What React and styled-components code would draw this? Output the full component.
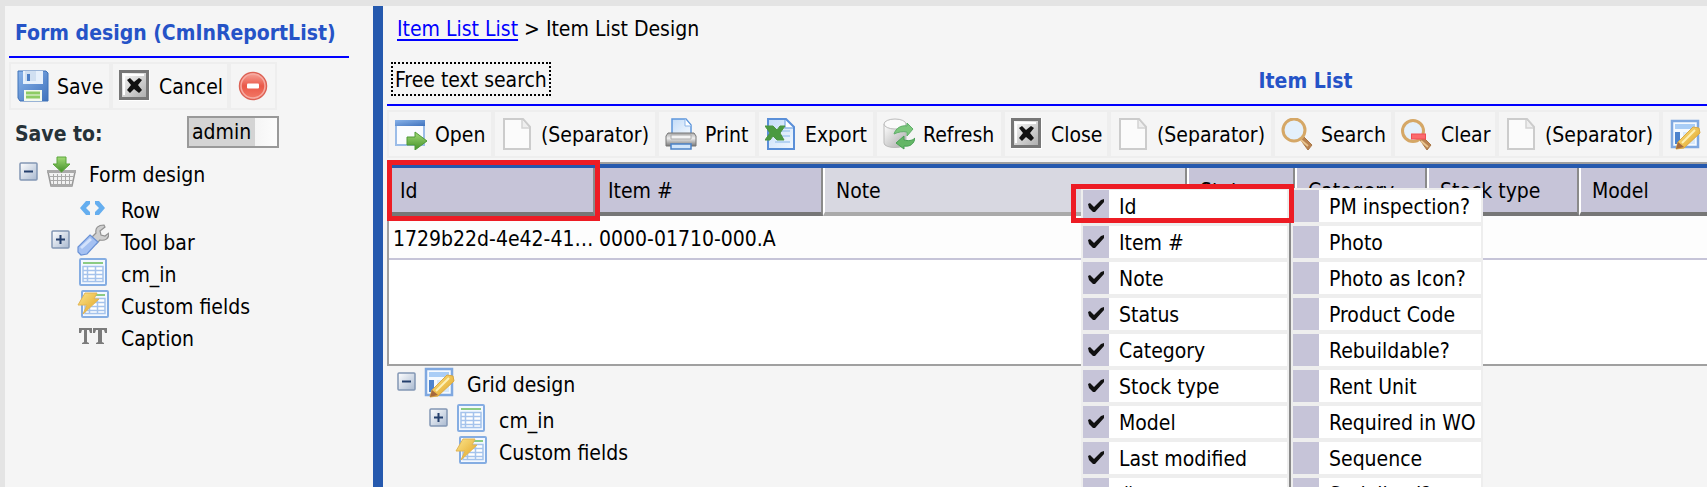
import React, { useState } from "react";
import styled, { createGlobalStyle } from "styled-components";

const GlobalStyle = createGlobalStyle`
  * {
    box-sizing: border-box;
  }

  body {
    margin: 0;
    background-color: #e4e4e4;
  }

  body, button, select {
    font-family: "DejaVu Sans Condensed", "DejaVu Sans", sans-serif;
    font-stretch: condensed;
    font-size: 21px;
    line-height: 26px;
    color: #000;
  }
`;

const Shell = styled.div`
  display: flex;
  height: 100vh;
  padding: 6px 0 0 5px;
  overflow: hidden;
`;

const SidePanel = styled.aside`
  flex: 0 0 368px;
  padding-left: 4px;
  background-color: #f5f5f5;
`;

const Splitter = styled.div`
  flex: 0 0 10px;
  background-color: #2559ae;
`;

const Main = styled.main`
  flex: 1;
  min-width: 0;
  padding-left: 4px;
  background-color: #f5f5f5;
`;

/* the report is wider than most screens, the rest runs off to the right */
const Report = styled.div`
  min-width: 1833px;
`;

const PanelTitle = styled.h1`
  margin: 0 24px 4px 0;
  padding: 14px 0 10px 6px;
  border-bottom: 2px solid #00f;
  font-size: 21px;
  line-height: 26px;
  font-weight: bold;
  white-space: nowrap;
  color: #2553c7;
`;

const ToolBar = styled.div`
  display: flex;
`;

const ToolButton = styled.button`
  display: flex;
  flex: none;
  align-items: center;
  gap: 8px;
  width: ${({ $width }) => $width}px;
  height: 48px;
  padding: 0 6px;
  border: 2px solid #eee;
  background-color: #f5f5f5;
  white-space: nowrap;
  cursor: pointer;

  &:hover {
    background-color: #fff;
  }
`;

const ToolText = styled.span`
  padding-top: 2px;
`;

const SaveRow = styled.div`
  display: flex;
  align-items: center;
  padding: 6px 0 8px 6px;
`;

const SaveLabel = styled.label`
  width: 172px;
  padding-top: 4px;
  font-weight: bold;
  color: #263238;
`;

const SaveSelect = styled.select`
  appearance: none;
  width: 92px;
  height: 32px;
  padding: 0 3px;
  border: 2px solid #999;
  border-radius: 0;
  background: linear-gradient(90deg, #d4d4d4 66px, #f5f5f5 66px, #fcfcfc);
`;

const TreeList = styled.ul`
  margin: 0;
  padding: 0 0 0 10px;
  list-style: none;
`;

const TreeRow = styled.li`
  display: flex;
  align-items: flex-start;
  height: ${({ $level }) => ($level ? 32 : 36)}px;
  padding-left: ${({ $level }) => $level * 32}px;
`;

const ToggleSlot = styled.div`
  flex: 0 0 26px;
  padding-top: 6px;
`;

const Toggle = styled.button`
  display: block;
  padding: 0;
  border: 0;
  background: none;
  cursor: pointer;
`;

const TreeText = styled.span`
  padding: 5px 0 0 12px;
  line-height: 28px;
`;

const BreadCrumb = styled.nav`
  padding: 10px 0 20px 10px;
`;

const CrumbLink = styled.a`
  color: #00f;
  text-decoration: underline;
  text-decoration-thickness: 2px;
  text-underline-offset: 3px;
`;

const ReportHead = styled.header`
  display: grid;
  grid-template-columns: 1fr auto 1fr;
  align-items: start;
  height: 44px;
  margin-bottom: 4px;
  padding-left: 4px;
  border-bottom: 2px solid #00f;
`;

const SearchCaption = styled.span`
  justify-self: start;
  padding: 2px 2px 0;
  border: 2px dotted #000;
  line-height: 28px;
`;

const ReportTitle = styled.h2`
  margin: 0;
  padding-top: 6px;
  font-size: 21px;
  line-height: 26px;
  font-weight: bold;
  color: #2553c7;
`;

const GridBox = styled.section`
  position: relative;
  height: 204px;
  margin: 4px 0 0;
  border: 2px solid #a0a0a0;
  background-color: #fff;
`;

const Table = styled.table`
  width: 100%;
  table-layout: fixed;
  border-collapse: separate;
  border-spacing: 0;
  border-top: 4px solid #2559ae;
`;

const HeadCell = styled.th`
  position: relative;
  z-index: ${({ $first }) => ($first ? 1 : 0)};
  width: ${({ $width }) => ($width ? `${$width}px` : "auto")};
  height: 48px;
  padding: 2px 11px 0;
  border-left: ${({ $first }) => ($first ? "0" : "2px solid #fff")};
  border-right: 2px solid #8a8a8a;
  border-bottom: 4px solid ${({ $active }) => ($active ? "#aaa" : "#777")};
  background-color: ${({ $active }) => ($active ? "#d8d8e1" : "#c6c4d8")};
  font-weight: normal;
  text-align: left;
`;

const Cell = styled.td`
  height: 44px;
  padding: 4px 0 0 4px;
  border-bottom: 2px solid #c6c4d8;
  background-color: #fdfdfd;
  overflow: hidden;
  text-overflow: ellipsis;
  white-space: nowrap;
`;

const RedFrame = styled.span`
  position: absolute;
  inset: ${({ $inset }) => $inset};
  border: 5px solid #ed1c24;
  pointer-events: none;
`;

const Menu = styled.div`
  position: absolute;
  z-index: 2;
  top: 24px;
  left: 692px;
  display: grid;
  grid-template-columns: 208px 194px;
  background-color: #eee;
`;

const MenuColumn = styled.div`
  display: flex;
  flex-direction: column;
  gap: 4px;
  padding: 2px;

  &:first-child {
    position: relative;
    z-index: 1;
  }

  & + & {
    border-left: 2px solid #888;
  }
`;

const MenuItem = styled.label`
  position: relative;
  display: grid;
  grid-template-columns: 26px 1fr;
  align-items: center;
  height: 32px;
  background-color: #fff;
  white-space: nowrap;
  cursor: pointer;
`;

const MenuCheck = styled.input`
  appearance: none;
  grid-area: 1 / 1;
  width: 26px;
  height: 32px;
  margin: 0;
  background-color: #c6c4d8;

  & + svg {
    visibility: hidden;
  }

  &:checked + svg {
    visibility: visible;
  }
`;

const CheckMark = styled.svg`
  grid-area: 1 / 1;
  justify-self: center;
  pointer-events: none;
`;

const MenuText = styled.span`
  padding: 2px 0 0 10px;
`;

const Icon = ({ children, size = 32 }) => (
  <svg width={size} height={size} viewBox={`0 0 ${size} ${size}`} style={{ flex: "none" }} aria-hidden="true">
    {children}
  </svg>
);

const Gradients = () => (
  <svg width="0" height="0" style={{ position: "absolute" }} aria-hidden="true">
    <defs>
      <linearGradient id="blue" x2="1" y2="1">
        <stop offset="0" stopColor="#8ab4ea" />
        <stop offset="1" stopColor="#3f72bd" />
      </linearGradient>
      <linearGradient id="paleBlue" x2="1" y2="1">
        <stop offset="0" stopColor="#c3dcf8" />
        <stop offset="1" stopColor="#f2f8fe" />
      </linearGradient>
      <linearGradient id="grey" x2="1" y2="1">
        <stop offset="0" stopColor="#fff" />
        <stop offset="1" stopColor="#aaa" />
      </linearGradient>
      <linearGradient id="metal" x2="0" y2="1">
        <stop offset="0" stopColor="#aaa" />
        <stop offset="0.4" stopColor="#eee" />
        <stop offset="1" stopColor="#777" />
      </linearGradient>
      <linearGradient id="green" x2="0" y2="1">
        <stop offset="0" stopColor="#a2db77" />
        <stop offset="1" stopColor="#459129" />
      </linearGradient>
      <linearGradient id="gold" x2="1" y2="1">
        <stop offset="0" stopColor="#fbe58c" />
        <stop offset="1" stopColor="#e1a11e" />
      </linearGradient>
      <linearGradient id="red" x2="0" y2="1">
        <stop offset="0" stopColor="#f7a79d" />
        <stop offset="0.5" stopColor="#ea5848" />
        <stop offset="1" stopColor="#f37b68" />
      </linearGradient>
      <linearGradient id="toggle" x2="1" y2="1">
        <stop offset="0" stopColor="#fff" />
        <stop offset="1" stopColor="#a9b9d0" />
      </linearGradient>
    </defs>
  </svg>
);

const SaveIcon = () => (
  <Icon>
    <path d="M1 1h28l2 2v28H3l-2-3z" fill="url(#blue)" stroke="#3f72b8" />
    <path d="M6 1h20v13H6z" fill="#e7f0fb" />
    <path d="M8 1h11v10H8z" fill="#d0dff1" />
    <path d="M10 4h3v7h-3z" fill="#4b7dc5" />
    <path d="M7 20h18v11H7z" fill="#f3f9ed" />
    <path d="M9 23h14M9 27h14" stroke="#8dcc64" strokeWidth="3" />
  </Icon>
);

const CloseIcon = () => (
  <Icon>
    <path d="M0 0h31v31H0z" fill="#fff" />
    <path d="M1.5 1.5h27v27h-27z" fill="url(#grey)" stroke="#777" strokeWidth="3" />
    <path d="M5 25V5h20" fill="none" stroke="#fff" strokeWidth="2" />
    <path d="M8 10l3-2 4 4 5-4 3 2-4 5 4 5-3 3-5-4-4 4-3-3 4-5z" fill="#111" />
  </Icon>
);

const DeleteIcon = () => (
  <Icon>
    <circle cx="16" cy="16" r="13.5" fill="url(#red)" stroke="#dc6255" strokeWidth="1.5" />
    <circle cx="16" cy="16" r="12" fill="none" stroke="#f6aaa1" strokeWidth="1.5" />
    <rect x="10" y="13.5" width="12" height="5" rx="1" fill="#fff" />
  </Icon>
);

const BasketIcon = () => (
  <Icon>
    <path d="M3 16h27l-3 14H6z" fill="#f2f2f2" stroke="#999" strokeWidth="1.5" />
    <path d="M5 20.5h24M5 24.5h23M8.500 18v12M12.500 18v12M16.500 18v12M20.500 18v12M24.500 18v12" stroke="#aaa" />
    <path d="M2 14h29v3H2zM6 28h21v3H6z" fill="#aaa" />
    <path d="M12 1h9v7h4l-8.500 8L8 8h4z" fill="url(#green)" stroke="#5aa53b" />
  </Icon>
);

const CodeIcon = () => (
  <Icon>
    <path d="M13 9H9l-6 7 6 7h4v-3l-4-4 4-4zM18 9h4l6 7-6 7h-4v-3l4-4-4-4z" fill="#65aeef" />
  </Icon>
);

const WrenchIcon = () => (
  <Icon>
    <path
      d="M15 13l4-4c-1-5 2-8 8-8l1 2-5 4 1 4 4 1 4-3c0 6-4 8-9 7l-4 4z"
      fill="#cfcfcf"
      stroke="#929292"
      strokeWidth="1.2"
    />
    <path d="M13 11l8 7-11 12-6 1-3-3v-5z" fill="#a5c1f2" stroke="#6a92d6" strokeWidth="1.2" />
    <path d="M4 24l10-9" stroke="#d3e2fb" strokeWidth="3" />
  </Icon>
);

const Sheet = ({ x = 0 }) => (
  <g transform={`translate(${x} 0)`}>
    <rect x="3" y="3" width="26" height="26" rx="1" fill="#f3f8ff" stroke="#85ade2" strokeWidth="2" />
    <path d="M6 7h20" stroke="#8bcb83" strokeWidth="2" />
    <path
      d="M6 10.500h20v15H6zM6 14.500h20M6 18.500h20M6 22.500h20M10.500 10.500v15M18.500 10.500v15"
      fill="#fff"
      stroke="#a5c3ec"
      strokeWidth="1.5"
    />
  </g>
);

const SheetIcon = () => (
  <Icon>
    <Sheet />
  </Icon>
);

const CustomIcon = () => (
  <Icon>
    <Sheet x={2} />
    <path d="M8 5h12l-3 6h5L6 26l4-9H1z" fill="url(#gold)" stroke="#e3b654" />
  </Icon>
);

const CaptionIcon = () => (
  <Icon>
    <path
      d="M2 8h13v5h-2l-1-3h-2v12l2 1v1H5v-1l2-1V10H5l-1 3H2zM16 8h14v5h-2l-1-3h-2v12l2 1v1h-8v-1l2-1V10h-2l-1 3h-2z"
      fill="#7b7b7b"
    />
  </Icon>
);

const OpenIcon = () => (
  <Icon>
    <path d="M1 3h28v24H1z" fill="#fafcff" stroke="#9cbde8" strokeWidth="2" />
    <path d="M0 2h30v6H0z" fill="url(#blue)" />
    <path d="M12 19h8v-5l12 9-12 9v-5h-8z" fill="url(#green)" stroke="#4f9a36" />
  </Icon>
);

const PageIcon = () => (
  <Icon>
    <path d="M3 1h19l7 8v22H3z" fill="#fbfbfb" stroke="#ccc" strokeWidth="2" />
    <path d="M21 2v8h7" fill="#eee" stroke="#d4d4d4" strokeWidth="1.5" />
  </Icon>
);

const PrintIcon = () => (
  <Icon>
    <path d="M7 17V1h14l5 6v10z" fill="url(#paleBlue)" stroke="#5d96dc" strokeWidth="1.5" />
    <path d="M20 1v7h6" fill="#fff" stroke="#8db6e8" />
    <path d="M3 15h26l2 3v10H1V18z" fill="url(#metal)" stroke="#777" />
    <path d="M6 17h20v4H6z" fill="#f3f3f3" stroke="#aaa" />
    <path d="M6 26h20v5H6z" fill="#d2e6fb" stroke="#4b82c8" strokeWidth="1.5" />
  </Icon>
);

const ExcelIcon = () => (
  <Icon>
    <path d="M3 1h18l8 8v22H3z" fill="url(#paleBlue)" stroke="#5a8fd8" strokeWidth="2" />
    <path d="M20 2v8h8" fill="#fff" stroke="#8db6e8" strokeWidth="1.5" />
    <path d="M12 13h13M14 18h11M10 24h15" stroke="#b5d3f3" strokeWidth="2" />
    <path d="M0 8h8l4 4 3-4h5l-5 7 4 7h-7l-4-4-3 4H0l5-7z" fill="#4a9a40" stroke="#4d9440" />
  </Icon>
);

const RefreshIcon = () => (
  <Icon>
    <path d="M1 6v19c0 6 22 6 22 0V6z" fill="url(#grey)" stroke="#bbb" />
    <ellipse cx="12" cy="6" rx="11" ry="5" fill="#fafafa" stroke="#bbb" />
    <path d="M11 16c2-6 7-9 13-8V5l6 6-6 7v-4c-4-1-9 0-13 2z" fill="#7cc77c" stroke="#5fae69" />
    <path d="M32 20c-1 6-5 9-11 8v3l-8-6 8-7v4c4 1 8 1 11-2z" fill="#64b666" stroke="#479f52" />
  </Icon>
);

const SearchIcon = () => (
  <Icon>
    <path d="M19 21l3-3 9 9-4 5z" fill="#b98250" stroke="#a97745" />
    <circle cx="13" cy="12" r="11" fill="#e4f0fb" stroke="#d5a766" strokeWidth="3" />
    <path d="M20 22l7 6" stroke="#e8c48f" strokeWidth="2" />
  </Icon>
);

const ClearIcon = () => (
  <Icon>
    <path d="M19 22l3-3 8 8-4 5z" fill="#b98250" stroke="#a97745" />
    <circle cx="12" cy="13" r="10.500" fill="#e4f0fb" stroke="#d5a766" strokeWidth="3" />
    <path d="M20 23l7 6" stroke="#e8c48f" strokeWidth="2" />
    <rect x="10.500" y="16" width="14" height="5" fill="#fb6b6e" stroke="#f14c54" />
  </Icon>
);

const DesignIcon = () => (
  <Icon>
    <rect x="3" y="3" width="26" height="26" fill="#f5faff" stroke="#7fa8e0" strokeWidth="2.5" />
    <path d="M6 6h20v5H6z" fill="#a9cdf6" />
    <path d="M6 14h5v12H6z" fill="#4d83cd" />
    <path d="M14 14h12v12H14z" fill="#d8e9fb" />
    <path d="M9 24L24 9l6 1 1 5-16 15-8 1z" fill="url(#gold)" stroke="#dba943" />
    <path d="M9 24l6 5-8 2z" fill="#a66a3d" />
    <path d="M13 25L26 12" stroke="#fdf0b5" strokeWidth="2" />
  </Icon>
);

const ToggleIcon = ({ open }) => (
  <Icon size={20}>
    <rect x="1" y="1" width="17" height="17" rx="1" fill="url(#toggle)" stroke="#8296b4" strokeWidth="1.5" />
    <path d={open ? "M5 9.500h9" : "M5 9.500h9M9.500 5v9"} stroke="#243f6c" strokeWidth="2" />
  </Icon>
);

const formTree = [
  { name: "Form design", icon: BasketIcon, level: 0, open: true },
  { name: "Row", icon: CodeIcon, level: 1 },
  { name: "Tool bar", icon: WrenchIcon, level: 1, open: false },
  { name: "cm_in", icon: SheetIcon, level: 1 },
  { name: "Custom fields", icon: CustomIcon, level: 1 },
  { name: "Caption", icon: CaptionIcon, level: 1 },
];

const gridTree = [
  { name: "Grid design", icon: DesignIcon, level: 0, open: true },
  { name: "cm_in", icon: SheetIcon, level: 1, open: false },
  { name: "Custom fields", icon: CustomIcon, level: 1 },
];

const tools = [
  { name: "Open", icon: OpenIcon, width: 106 },
  { name: "(Separator)", icon: PageIcon, width: 164 },
  { name: "Print", icon: PrintIcon, width: 100 },
  { name: "Export", icon: ExcelIcon, width: 118 },
  { name: "Refresh", icon: RefreshIcon, width: 128 },
  { name: "Close", icon: CloseIcon, width: 106 },
  { name: "(Separator)", icon: PageIcon, width: 164 },
  { name: "Search", icon: SearchIcon, width: 120 },
  { name: "Clear", icon: ClearIcon, width: 104 },
  { name: "(Separator)", icon: PageIcon, width: 164 },
  { name: "Design", icon: DesignIcon, width: 120 },
];

const columns = [
  { name: "Id", width: 206, value: "1729b22d-4e42-4161-9c1d" },
  { name: "Item #", width: 228, value: "0000-01710-000.A" },
  { name: "Note", width: 364, active: true },
  { name: "Status", width: 108 },
  { name: "Category", width: 132 },
  { name: "Stock type", width: 152 },
  { name: "Model" },
];

const shownFields = ["Id", "Item #", "Note", "Status", "Category", "Stock type", "Model", "Last modified", "#"];

const hiddenFields = [
  "PM inspection?",
  "Photo",
  "Photo as Icon?",
  "Product Code",
  "Rebuildable?",
  "Rent Unit",
  "Required in WO",
  "Sequence",
  "Serialized?",
];

const Tree = ({ items }) => (
  <TreeList>
    {items.map(({ name, icon: ItemIcon, level, open }) => (
      <TreeRow key={name} $level={level}>
        <ToggleSlot>
          {open !== undefined && (
            <Toggle type="button" aria-expanded={open} aria-label={name}>
              <ToggleIcon open={open} />
            </Toggle>
          )}
        </ToggleSlot>
        <ItemIcon />
        <TreeText>{name}</TreeText>
      </TreeRow>
    ))}
  </TreeList>
);

const ColumnMenu = () => {
  const [checked, setChecked] = useState(shownFields);

  const toggle = (name) =>
    setChecked((list) => (list.includes(name) ? list.filter((n) => n !== name) : [...list, name]));

  return (
    <Menu>
      {[shownFields, hiddenFields].map((fields) => (
        <MenuColumn key={fields[0]}>
          {fields.map((name) => (
            <MenuItem key={name}>
              <MenuCheck type="checkbox" checked={checked.includes(name)} onChange={() => toggle(name)} />
              <CheckMark width="16" height="16" viewBox="0 0 16 16">
                <path d="M0 6l2-1 4 4 7-7 3-1v3L7 14H5L1 10z" fill="#111" />
              </CheckMark>
              <MenuText>{name}</MenuText>
              {name === "Id" && <RedFrame $inset="-6px -7px -1px -12px" />}
            </MenuItem>
          ))}
        </MenuColumn>
      ))}
    </Menu>
  );
};

const App = () => {
  return (
    <Shell>
      <GlobalStyle />
      <Gradients />
      <SidePanel>
        <PanelTitle>Form design (CmInReportList)</PanelTitle>
        <ToolBar>
          <ToolButton type="button" $width={102}>
            <SaveIcon />
            <ToolText>Save</ToolText>
          </ToolButton>
          <ToolButton type="button" $width={118}>
            <CloseIcon />
            <ToolText>Cancel</ToolText>
          </ToolButton>
          <ToolButton type="button" $width={48} aria-label="Delete">
            <DeleteIcon />
          </ToolButton>
        </ToolBar>
        <SaveRow>
          <SaveLabel htmlFor="saveTo">Save to:</SaveLabel>
          <SaveSelect id="saveTo">
            <option>admin</option>
          </SaveSelect>
        </SaveRow>
        <Tree items={formTree} />
      </SidePanel>
      <Splitter />
      <Main>
        <Report>
          <BreadCrumb>
            <CrumbLink href="#list">Item List List</CrumbLink> &gt; Item List Design
          </BreadCrumb>
          <ReportHead>
            <SearchCaption>Free text search</SearchCaption>
            <ReportTitle>Item List</ReportTitle>
          </ReportHead>
          <ToolBar>
            {tools.map(({ name, icon: ToolIcon, width }, i) => (
              <ToolButton key={i} type="button" $width={width}>
                <ToolIcon />
                <ToolText>{name}</ToolText>
              </ToolButton>
            ))}
          </ToolBar>
          <GridBox>
            <Table>
              <thead>
                <tr>
                  {columns.map(({ name, width, active }, i) => (
                    <HeadCell key={name} $width={width} $active={active} $first={i === 0}>
                      {name}
                      {i === 0 && <RedFrame $inset="-8px -7px -9px -2px" />}
                    </HeadCell>
                  ))}
                </tr>
              </thead>
              <tbody>
                <tr>
                  {columns.map(({ name, value }) => (
                    <Cell key={name}>{value}</Cell>
                  ))}
                </tr>
              </tbody>
            </Table>
            <ColumnMenu />
          </GridBox>
          <Tree items={gridTree} />
        </Report>
      </Main>
    </Shell>
  );
};

export default App;
